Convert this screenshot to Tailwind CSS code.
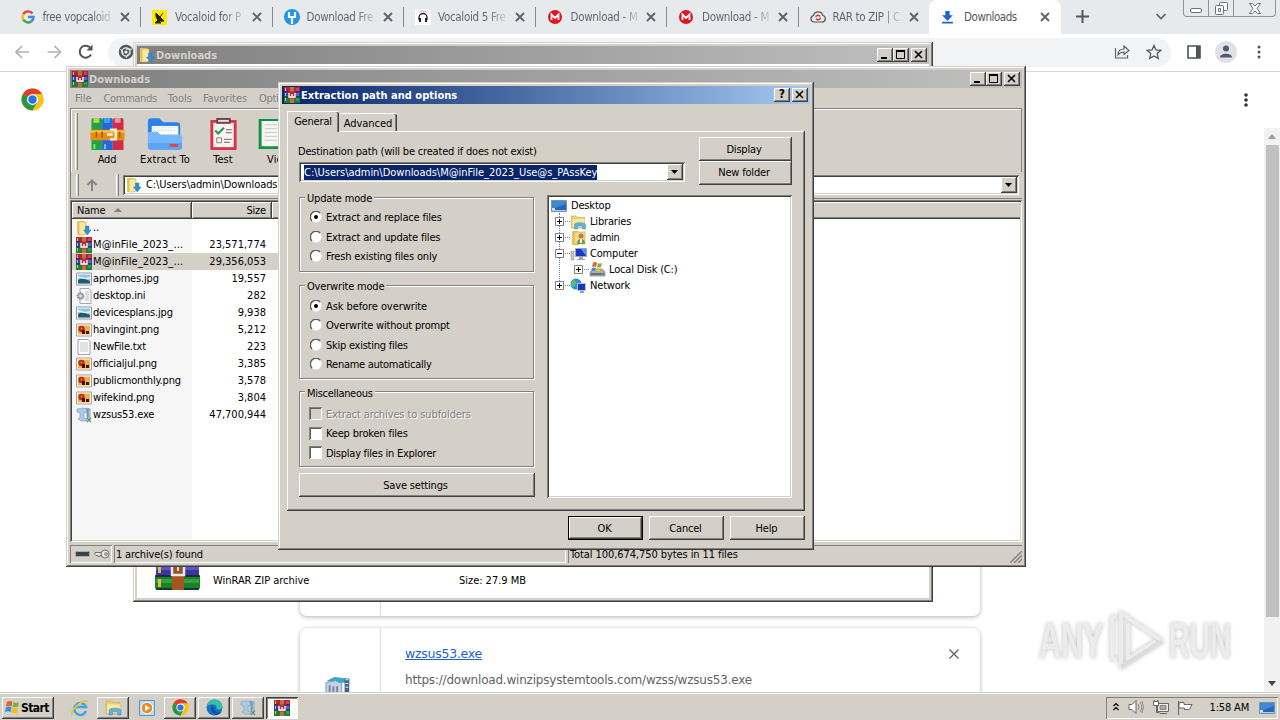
<!DOCTYPE html>
<html lang="en">
<head>
  <meta charset="UTF-8">
  <meta name="viewport" content="width=device-width, initial-scale=1.0">
  <title>Downloads</title>
  <script src="https://cdn.jsdelivr.net/npm/@tailwindcss/browser@4"></script>
</head>
<body class="relative w-[1280px] h-[720px] overflow-hidden bg-white text-black font-['DejaVu_Sans_Condensed','DejaVu_Sans',sans-serif] text-[11px] leading-[14px] tracking-[-0.18px] whitespace-nowrap">

  <!-- shared icons -->
  <svg class="hidden">
    <symbol id="i-rar" viewBox="0 0 16 16">
      <path d="M0 0h16v5H0z" fill="#b3243c"/><path d="M0 5h16v5H0z" fill="#3b3fae"/><path d="M0 10h16v6H0z" fill="#15803d"/>
      <path d="M1 1h1v3H1zM1 11h1v3H1z" fill="#e8c547"/><path d="M1 6h1v3H1z" fill="#7dd3fc"/><path d="M12 1h3v3h-3z" fill="#d43c5c"/><path d="M12 6h3v3h-3z" fill="#5f62d0"/><path d="M12 11h3v3h-3z" fill="#26a04c"/>
      <path d="M0 4.700h16M0 10h16" stroke="#20202c" stroke-width=".7"/>
      <path d="M6 0h4v16H6z" fill="#c07030"/><path d="M4 4.500h8v7H4z" fill="#a03440"/><path d="M5 6v4h6V6M8 7v3" fill="none" stroke="#fff" stroke-width="1.300"/>
    </symbol>
    <symbol id="i-folder" viewBox="0 0 16 16">
      <path d="M1 1h7l1 2v12H1z" fill="#e9c860"/><path d="M3 2h7v12l-3 1H3z" fill="#fbe9a0" stroke="#d0a840" stroke-width=".6"/>
      <path d="M9.500 6h3.500v4h2l-3.700 5L7.500 10h2z" fill="#2e8fdc" stroke="#1e6fb8" stroke-width=".4"/>
    </symbol>
    <symbol id="i-jpg" viewBox="0 0 16 16">
      <path d="M.5 2h15v12H.5z" fill="#fff" stroke="#8a9aa8"/><path d="M2 3.500h12v9H2z" fill="#8cc7ea"/><path d="M2 9l4-2 8 3v2.500H2z" fill="#245a6c"/><path d="M2 5l7 2 5-1v2L8 8 2 7z" fill="#e4f4fb"/>
    </symbol>
    <symbol id="i-png" viewBox="0 0 16 16">
      <path d="M.5 2h15v12H.5z" fill="#fff" stroke="#a8a090"/><path d="M2 3.500h12v9H2z" fill="#f0b050"/><circle cx="5.500" cy="7" r="3.200" fill="#b8300e"/><path d="M6 8h3v4H6zM10 9h3v3h-3z" fill="#40140a"/><circle cx="5.500" cy="6.500" r="1" fill="#f07820"/>
    </symbol>
    <symbol id="i-txt" viewBox="0 0 16 16">
      <path d="M2 .5h10l2 2v13H2z" fill="#fbfbfb" stroke="#a0a8ac"/><path d="M4 4h8M4 6h8M4 8h8M4 10h8M4 12h8" stroke="#b8c0c4" stroke-width=".8"/>
    </symbol>
    <symbol id="i-ini" viewBox="0 0 16 16">
      <path d="M4 .5h9l2 2v13H4z" fill="#fbfbfb" stroke="#a0a8ac"/><path d="M9 4h4M9 6h4M10 8h3M9 10h4M9 12h4" stroke="#a8b0b4" stroke-width=".8"/>
      <circle cx="4.500" cy="8" r="3" fill="#e4e8ec" stroke="#7d8b98" stroke-width="1.700" stroke-dasharray="1.500 .7"/><circle cx="4.500" cy="8" r="2" fill="#dfe5ea" stroke="#6e7c8a" stroke-width=".7"/>
    </symbol>
    <symbol id="i-exe" viewBox="0 0 16 16">
      <path d="M1 2l6-1 4 1v3l-3 1v5l3 1v2H5l-3-2 2-2V6L1 5z" fill="#a9cbe4" stroke="#6e9cc0" stroke-width=".6"/><path d="M10 1l4 1v9h-3V4z" fill="#d2dde6" stroke="#5a84a8" stroke-width=".7"/><path d="M11 3h2M11 5h2M11 7h2M11 9h2" stroke="#3b6ea0"/><path d="M11 11l4 4M15 11l-4 4" stroke="#5f9470" stroke-width="1.300"/>
    </symbol>
    <symbol id="i-chrome" viewBox="0 0 24 24">
      <circle cx="12" cy="12" r="11.500" fill="#fbc116"/>
      <path d="M12 12L2 6.300A11.500 11.500 0 0 1 22 6.300H12z" fill="#e33b2e"/><path d="M12 12L2 6.300A11.500 11.500 0 0 0 12 23.500l5-8.600z" fill="#279847"/>
      <path d="M12 6.300h10a11.500 11.500 0 0 1-10 17.200l5-8.500z" fill="#fbc116"/>
      <circle cx="12" cy="12" r="5.700" fill="#fff"/><circle cx="12" cy="12" r="4.400" fill="#2675e8"/>
    </symbol>
    <symbol id="i-x" viewBox="0 0 10 10"><path d="M1 1l8 8M9 1l-8 8" stroke="#5f6368" stroke-width="1.900" fill="none"/></symbol>
    <symbol id="i-mega" viewBox="0 0 14 14"><circle cx="7" cy="7" r="7" fill="#e0151f"/><path d="M3.500 10V4.500L7 8l3.500-3.500V10" fill="none" stroke="#fff" stroke-width="1.800"/></symbol>
    <symbol id="i-desktop" viewBox="0 0 16 16"><path d="M.5 2.500h15v11H.5z" fill="#2367b8" stroke="#7493b4"/><path d="M1 3h14v3L1 11z" fill="#4088d4"/><path d="M1 12h14v1H1z" fill="#b4cce2"/><path d="M1 10h3v2H1z" fill="#cfe3f5"/></symbol>
    <symbol id="i-lib" viewBox="0 0 16 16"><path d="M1 2h5l1 1.500h7V14H1z" fill="#ecd06c" stroke="#c9a640" stroke-width=".6"/><path d="M2 5h12v8H2z" fill="#f9e9a2"/><path d="M4 15v-4.500C4 8 14 8 15 10.500V15h-3v-3H7v3z" fill="#5fb4dc" stroke="#3c88b4" stroke-width=".5"/></symbol>
    <symbol id="i-dl" viewBox="0 0 12 12"><path d="M4 0h4v4h3L6 9 1 4h3zM1 10h10v1.500H1z" fill="#1967d2"/></symbol>
    <symbol id="i-min" viewBox="0 0 16 14"><path d="M4 9h6v2H4z"/></symbol>
    <symbol id="i-max" viewBox="0 0 16 14"><path d="M3.500 2.500h8v8h-8z" fill="none" stroke="#000"/><path d="M3 2h9v2H3z"/></symbol>
    <symbol id="i-cls" viewBox="0 0 16 14"><path d="M4 3l7 7M11 3l-7 7" stroke="#000" stroke-width="1.600"/></symbol>
  </svg>

  <!-- browser: tab strip -->
  <div class="flex h-[34px] bg-[#e7eaed] pl-[9.5px] text-[11.5px] text-[#5f6368] tracking-[-0.3px]">
    <div class="flex items-center w-[131.5px] h-[34px] pl-[11px] pr-[11px] relative">
      <svg class="w-[14px] h-[14px] shrink-0" viewBox="0 0 14 14" fill="none" stroke-width="2.400"><path d="M11.500 3.500A5.500 5.500 0 0 0 2.300 4.300" stroke="#ea4335"/><path d="M2.300 4.300a5.500 5.500 0 0 0 0 5.400" stroke="#fbbc05"/><path d="M2.300 9.700a5.500 5.500 0 0 0 8.200 1.500" stroke="#34a853"/><path d="M10.500 11.200A5.500 5.500 0 0 0 12.500 7H7" stroke="#4285f4"/></svg>
      <span class="ml-2 w-[76px] tracking-[-0.4px] bg-linear-to-r from-[#5f6368] from-[50px] to-[#5f6368]/10 to-[70px] bg-clip-text text-transparent">free vopcaloid</span>
      <svg class="w-[10px] h-[10px] ml-auto shrink-0"><use href="#i-x"/></svg>
      <i class="absolute right-0 top-[7px] w-px h-5 bg-[#85888c]"></i>
    </div>
    <div class="flex items-center w-[131.5px] h-[34px] pl-[11px] pr-[11px] relative">
      <svg class="w-[15px] h-[15px] shrink-0" viewBox="0 0 15 15"><path d="M0 0h15v15H0z" fill="#ffe900"/><path d="M4 3l8 8c-4 1-9-1-8-8zM6 10l-3 3h6zM8 7l3-4" fill="#222" stroke="#222"/></svg>
      <span class="ml-2 w-[75px] bg-linear-to-r from-[#5f6368] from-[50px] to-[#5f6368]/10 to-[70px] bg-clip-text text-transparent">Vocaloid for P</span>
      <svg class="w-[10px] h-[10px] ml-auto shrink-0"><use href="#i-x"/></svg>
      <i class="absolute right-0 top-[7px] w-px h-5 bg-[#85888c]"></i>
    </div>
    <div class="flex items-center w-[131.5px] h-[34px] pl-[11px] pr-[11px] relative">
      <svg class="w-[16px] h-[16px] shrink-0" viewBox="0 0 16 16"><circle cx="8" cy="8" r="8" fill="#2196e8"/><path d="M5 3v5h6V3M8 8v7" stroke="#fff" stroke-width="2.200" fill="none"/></svg>
      <span class="ml-[7px] w-[75px] bg-linear-to-r from-[#5f6368] from-[50px] to-[#5f6368]/10 to-[70px] bg-clip-text text-transparent">Download Fre</span>
      <svg class="w-[10px] h-[10px] ml-auto shrink-0"><use href="#i-x"/></svg>
      <i class="absolute right-0 top-[7px] w-px h-5 bg-[#85888c]"></i>
    </div>
    <div class="flex items-center w-[131.5px] h-[34px] pl-[11px] pr-[11px] relative">
      <svg class="w-[16px] h-[16px] shrink-0" viewBox="0 0 16 16"><path d="M0 0h16v16H0z" fill="#fff"/><path d="M4 11V8.500a4 4 0 0 1 8 0V11" stroke="#222" stroke-width="1.300" fill="none"/><path d="M4 9h2v4H4zM10 9h2v4h-2z" fill="#222"/><path d="M4 3q4-2 8 0" stroke="#bbb" fill="none"/></svg>
      <span class="ml-[7px] w-[75px] bg-linear-to-r from-[#5f6368] from-[50px] to-[#5f6368]/10 to-[70px] bg-clip-text text-transparent">Vocaloid 5 Fre</span>
      <svg class="w-[10px] h-[10px] ml-auto shrink-0"><use href="#i-x"/></svg>
      <i class="absolute right-0 top-[7px] w-px h-5 bg-[#85888c]"></i>
    </div>
    <div class="flex items-center w-[131.5px] h-[34px] pl-[12px] pr-[11px] relative">
      <svg class="w-[14px] h-[14px] shrink-0"><use href="#i-mega"/></svg>
      <span class="ml-[9px] w-[75px] bg-linear-to-r from-[#5f6368] from-[50px] to-[#5f6368]/10 to-[70px] bg-clip-text text-transparent">Download - M</span>
      <svg class="w-[10px] h-[10px] ml-auto shrink-0"><use href="#i-x"/></svg>
      <i class="absolute right-0 top-[7px] w-px h-5 bg-[#85888c]"></i>
    </div>
    <div class="flex items-center w-[131.5px] h-[34px] pl-[12px] pr-[11px] relative">
      <svg class="w-[14px] h-[14px] shrink-0"><use href="#i-mega"/></svg>
      <span class="ml-[9px] w-[75px] bg-linear-to-r from-[#5f6368] from-[50px] to-[#5f6368]/10 to-[70px] bg-clip-text text-transparent">Download - M</span>
      <svg class="w-[10px] h-[10px] ml-auto shrink-0"><use href="#i-x"/></svg>
      <i class="absolute right-0 top-[7px] w-px h-5 bg-[#85888c]"></i>
    </div>
    <div class="flex items-center w-[130.500px] h-[34px] pl-[11px] pr-[10px]">
      <svg class="w-[16px] h-[16px] shrink-0" viewBox="0 0 16 16" fill="none"><path d="M4 13a3.300 3.300 0 0 1-.5-6.500 4.800 4.800 0 0 1 9.300 0A3.300 3.300 0 0 1 12 13z" stroke="#555" stroke-width="1.200"/><circle cx="8" cy="8.500" r="2.200" stroke="#d33" stroke-width="1.400" stroke-dasharray="5 1.500"/></svg>
      <span class="ml-[7px] w-[75px] bg-linear-to-r from-[#5f6368] from-[50px] to-[#5f6368]/10 to-[70px] bg-clip-text text-transparent">RAR to ZIP | C</span>
      <svg class="w-[10px] h-[10px] ml-auto shrink-0"><use href="#i-x"/></svg>
    </div>
    <div class="flex items-center w-[132px] h-[34px] pl-[12px] pr-[11px] bg-white rounded-t-[8px]">
      <svg class="w-[13px] h-[13px] shrink-0"><use href="#i-dl"/></svg>
      <span class="ml-[10px] text-[#54585c] tracking-[-0.45px]">Downloads</span>
      <svg class="w-[10px] h-[10px] ml-auto shrink-0"><use href="#i-x"/></svg>
    </div>
    <svg class="w-[13px] h-[13px] ml-[15px] mt-[10px]" viewBox="0 0 13 13"><path d="M6.500 0v13M0 6.500h13" stroke="#54575b" stroke-width="2"/></svg>
    <svg class="w-[10px] h-[7px] ml-[67px] mt-[13px]" viewBox="0 0 10 7" fill="none"><path d="M.5 1L5 5.500 9.500 1" stroke="#5c6064" stroke-width="1.600"/></svg>
    <div class="flex ml-[17px] w-[93px] h-[17px] border border-t-0 border-[#8f9296] rounded-b-[4px] text-[#5c6064]">
      <span class="flex w-[25px] border-r border-[#8f9296] justify-center pt-[8px]"><i class="block w-[12px] h-[5px] rounded-[2px] border border-[#6c7074] bg-white"></i></span>
      <span class="flex w-[25px] border-r border-[#8f9296] justify-center pt-[2px]"><svg class="w-[13px] h-[13px]" viewBox="0 0 13 13" fill="#fff" stroke="#6c7074"><path d="M4.500 1.500q0-1 1-1h6q1 0 1 1v6q0 1-1 1h-7z"/><path d="M.5 4.500q0-1 1-1h6q1 0 1 1v7q0 1-1 1h-6q-1 0-1-1z"/><path d="M3.500 6.500h2v3h-2z"/></svg></span>
      <span class="flex flex-1 justify-center pt-[3px]"><svg class="w-[12px] h-[11px]" viewBox="0 0 12 11" fill="#fff" stroke="#6c7074"><path d="M.5.5h3L6 3 8.500.5h3L8 5.500l3.500 5h-3L6 8l-2.500 2.500h-3L4 5.500z"/></svg></span>
    </div>
  </div>

  <!-- browser: toolbar -->
  <div class="flex items-center h-[38px] border-b border-[#d4d6d9] pl-[14px]">
    <svg class="w-[72px] h-[16px] -mt-[1px]" viewBox="0 0 72 16" fill="none" stroke="#b0b2b5" stroke-width="1.700"><path d="M15 8H2M8 2L2 8l6 6M33.500 8h13M40.500 2l6 6-6 6"/></svg>
    <svg class="w-[16px] h-[16px] -ml-[8px] -mt-[1px]" viewBox="0 0 16 16" fill="none"><path d="M13 10.500A6 6 0 1 1 12.500 4" stroke="#505458" stroke-width="2"/><path d="M14.500.5v6h-6z" fill="#505458"/></svg>
    <div class="flex items-center w-[1063px] h-[29px] ml-[14px] -mt-[1px] pl-[10px] pr-[9px] rounded-full bg-[#f1f3f4]">
      <svg class="w-[16px] h-[16px]" viewBox="0 0 16 16" fill="none" stroke="#54585c" stroke-width="2.500"><circle cx="8" cy="8" r="6"/><circle cx="8" cy="8" r="2.500" stroke-width="1.800"/><path d="M8 5.200h6M5.500 9.500L2.500 5M10.500 9.500L8 14" stroke="#f1f3f4" stroke-width="1"/></svg>
      <svg class="w-[16px] h-[14px] ml-auto" viewBox="0 0 16 14" fill="none" stroke="#5f6368" stroke-width="1.200"><path d="M1.500 3v10h12v-3"/><path d="M4 10c0-4 2-6 6-6V1l5 4.500-5 4V7c-3 0-4.500 1-6 3z"/></svg>
      <svg class="w-[16px] h-[16px] ml-[16px]" viewBox="0 0 16 16" fill="none" stroke="#54585c" stroke-width="1.300"><path d="M8 1.500l2 4.500 4.800.4-3.600 3.200 1.100 4.800L8 11.900l-4.300 2.500 1.100-4.800L1.200 6.400 6 6z"/></svg>
    </div>
    <svg class="w-[14px] h-[14px] ml-[16px] -mt-px" viewBox="0 0 14 14"><path d="M1 1h12v12H1z" fill="none" stroke="#505458" stroke-width="1.600"/><path d="M9 1h4v12H9z" fill="#505458"/></svg>
    <svg class="w-[22px] h-[22px] ml-[14px] -mt-px" viewBox="0 0 22 22"><circle cx="11" cy="11" r="11" fill="#dfe1e6"/><circle cx="11" cy="7.500" r="3" fill="#4c5b78"/><path d="M5 16.500c0-5 12-5 12 0z" fill="#4c5b78"/></svg>
    <svg class="w-[4px] h-[14px] ml-[20px] -mt-px" viewBox="0 0 4 14" fill="#505458"><circle cx="2" cy="2" r="1.500"/><circle cx="2" cy="7" r="1.500"/><circle cx="2" cy="12" r="1.500"/></svg>
  </div>

  <!-- browser: downloads page -->
  <div class="relative flex h-[620px] overflow-hidden font-['DejaVu_Sans','Liberation_Sans',sans-serif]">
    <svg class="w-[23px] h-[23px] ml-[21px] mt-[16px]"><use href="#i-chrome"/></svg>
    <div class="ml-[256px] w-[680px] flex flex-col gap-[12px]">
      <div class="h-[544px] shrink-0 rounded-[7px] bg-white shadow-[0_1px_4px_#b0b0b0] pl-[80px]"><div class="h-full border-l border-[#dadce0]"></div></div>
      <div class="h-[160px] shrink-0 rounded-[7px] bg-white shadow-[0_1px_4px_#b0b0b0] flex">
        <div class="w-[80px] pl-[25px] pt-[48px]"><svg class="w-[28px] h-[28px]" viewBox="0 0 30 30"><path d="M2 5l8-4 16 2v6l-6-2-9 2z" fill="#35a8cc"/><path d="M1 7l10-2 7 3v12H1z" fill="#c8d0de" stroke="#8098b8"/><path d="M5 10v8M9 11v8M13 11v8" stroke="#7482b8" stroke-width="2"/><path d="M21 3h5v20h-5z" fill="#40688e"/><path d="M22 4h3M22 8h3M22 12h3" stroke="#fff"/></svg></div>
        <div class="border-l border-[#dadce0] pl-6 pt-[17px] flex-1">
          <div class="flex items-center pr-[21px]">
            <a class="text-[12.500px] leading-[18px] text-[#1a62d0] underline tracking-[-0.25px]">wzsus53.exe</a>
            <svg class="w-[10px] h-[10px] ml-auto" viewBox="0 0 10 10"><path d="M.5.500l9 9M9.500.500l-9 9" stroke="#5f6368" stroke-width="1.400"/></svg>
          </div>
          <p class="mt-[8px] text-[12px] leading-[18px] text-[#5f6368] tracking-[-0.2px]">https://download.winzipsystemtools.com/wzss/wzsus53.exe</p>
        </div>
      </div>
    </div>
    <svg class="w-[4px] h-[14px] ml-[264px] mt-[21px]" viewBox="0 0 4 14" fill="#333"><circle cx="2" cy="2" r="1.800"/><circle cx="2" cy="7" r="1.800"/><circle cx="2" cy="12" r="1.800"/></svg>
    <div class="ml-auto mt-[56px] w-[16px] h-[564px] bg-[#f1f1f1] flex flex-col items-center pt-[6px]">
      <svg class="w-[8px] h-[5px]" viewBox="0 0 8 5"><path d="M0 5l4-5 4 5z" fill="#9a9a9a"/></svg>
      <div class="w-[13px] h-[472px] mt-[6px] bg-[#c1c1c1]"></div>
      <svg class="w-[8px] h-[5px] mt-[64px]" viewBox="0 0 8 5"><path d="M0 0h8L4 5z" fill="#444"/></svg>
    </div>
    <!-- watermark -->
    <div class="absolute left-[1039px] top-[537px] flex items-center h-[64px] text-[#ececec] font-bold font-['Liberation_Sans',sans-serif] tracking-normal drop-shadow-[0_0_2px_#c0c0c0]">
      <span class="block w-[69px] text-[50px] leading-[50px] origin-left scale-x-[0.61]">ANY</span>
      <svg class="w-[57px] h-[64px]" viewBox="0 0 57 64" fill="none" stroke="#ececec" stroke-width="4" stroke-linejoin="round"><path d="M9 8H4v42h5M13 4v54l41-26z"/><path d="M20 14v36l28-18"/><path d="M13 58l41-26" stroke="#dcdcdc"/></svg>
      <span class="block w-[66px] ml-[4px] text-[50px] leading-[50px] origin-left scale-x-[0.57]">RUN</span>
    </div>
  </div>

  <!-- taskbar -->
  <div class="flex items-center h-[28px] bg-[#d4d0c8] border-t border-[#d4d0c8] shadow-[inset_0_1px_#fff] pl-[2px] pt-[2px]">
    <div class="flex items-center w-[52px] h-[22px] pl-[3px] font-bold text-[12px] tracking-[-0.55px] shadow-[inset_-1px_-1px_#404040,inset_1px_1px_#fff,inset_-2px_-2px_#808080]">
      <svg class="w-[15px] h-[15px] mr-[1px]" viewBox="0 0 16 16"><path d="M2 2q3-2 6 0L7 7Q4 5 1 7z" fill="#e8632b"/><path d="M9 2q3 2 6 0l-1 5q-3 2-6 0z" fill="#76b83c"/><path d="M1 8q3-2 6 0l-1 5q-3-2-6 0z" fill="#3b8ede"/><path d="M8 8q3 2 6 0l-1 5q-3 2-6 0z" fill="#f5b921"/></svg>Start
    </div>
    <svg class="w-[18px] h-[18px] ml-[17px]" viewBox="0 0 18 18" fill="none"><path d="M15 12a6 6 0 1 1 0-4H4" stroke="#3ea6e0" stroke-width="2.600"/><path d="M1 16C-1 12 10 1 17 2" stroke="#f0bf30" stroke-width="1.600"/></svg>
    <div class="flex items-center justify-center w-[32px] h-[22px] ml-[8px] shadow-[inset_-1px_-1px_#404040,inset_1px_1px_#fff,inset_-2px_-2px_#808080]"><svg class="w-[17px] h-[17px]"><use href="#i-lib"/></svg></div>
    <svg class="w-[16px] h-[16px] ml-[10px]" viewBox="0 0 16 16"><path d="M.5.500h15v15H.5z" fill="#b9dcf4" stroke="#4c9ad0"/><circle cx="8" cy="8" r="5.800" fill="#f08a1c" stroke="#fff"/><path d="M6 5l5 3-5 3z" fill="#fff"/></svg>
    <div class="flex items-center justify-center w-[32px] h-[22px] ml-[9px] shadow-[inset_-1px_-1px_#404040,inset_1px_1px_#fff,inset_-2px_-2px_#808080]"><svg class="w-[17px] h-[17px]"><use href="#i-chrome"/></svg></div>
    <div class="flex items-center justify-center w-[32px] h-[22px] ml-[2px] shadow-[inset_-1px_-1px_#404040,inset_1px_1px_#fff,inset_-2px_-2px_#808080]"><svg class="w-[17px] h-[17px]" viewBox="0 0 17 17"><circle cx="8.500" cy="8.500" r="8" fill="#1571c8"/><path d="M1 7C2 2 6 0 10 .700c5 1 7 5 6.300 8-1 2.500-5 2-6 .8 1-2-1-4-3-4C4 5.500 2 6 1 7z" fill="#35c1a8"/><path d="M7 6c-4 3-1 9 4 10 3-1 4.500-3 4.500-3-5 1.500-8-1-8.500-7z" fill="#0d4fa0"/></svg></div>
    <div class="flex items-center justify-center w-[32px] h-[22px] ml-[2px] shadow-[inset_-1px_-1px_#404040,inset_1px_1px_#fff,inset_-2px_-2px_#808080]"><svg class="w-[16px] h-[16px]"><use href="#i-exe"/></svg></div>
    <div class="flex items-center justify-center w-[32px] h-[22px] ml-[2px] bg-[#fbfaf8] shadow-[inset_1px_1px_#404040,inset_-1px_-1px_#fff,inset_2px_2px_#808080]"><svg class="w-[16px] h-[16px]"><use href="#i-rar"/></svg></div>
    <div class="flex items-center ml-auto mr-[2px] w-[172px] h-[22px] pl-[7px] pr-[3px] shadow-[inset_1px_1px_#808080,inset_-1px_-1px_#fff]">
      <svg class="w-[6px] h-[9px] -mt-[2px]" viewBox="0 0 6 9" fill="none" stroke="#000" stroke-width="1.200"><path d="M.5 4L3 1.500 5.500 4M.5 8L3 5.500 5.500 8"/></svg>
      <svg class="w-[16px] h-[14px] ml-[9px] -mt-px" viewBox="0 0 16 14" fill="none" stroke="#666"><path d="M1 4.500h3l4-4v13l-4-4H1z" fill="#fff"/><path d="M10 4q2 3 0 6M12 2q3.500 5 0 10M14 1q3 6 0 12" stroke="#888"/></svg>
      <svg class="w-[16px] h-[15px] ml-[9px]" viewBox="0 0 16 15" fill="#eee" stroke="#666"><path d="M4.500 3.500h11v8h-11zM7 13.500h7"/><path d="M7 5.500h6v4H7z" fill="#aaa" stroke="#888"/><path d="M.5 1.500h5v4h-2v7h3" fill="none"/><path d="M.5 1.500h5v4h-5z" fill="#fff"/><path d="M1.500 0v2M4.500 0v2"/></svg>
      <svg class="w-[17px] h-[14px] ml-[8px]" viewBox="0 0 17 14" fill="#fff" stroke="#666"><path d="M1.500 0v14M2 1.500h5v2q3 0 8 0l-2.500 5h-5v-1.500H2z"/></svg>
      <span class="ml-auto mr-[10px]">1:58 AM</span>
      <svg class="w-[16px] h-[16px]"><use href="#i-desktop"/></svg>
    </div>
  </div>

  <!-- explorer window -->
  <div class="absolute left-[133px] top-[42px] w-[800px] h-[560px] bg-[#d4d0c8] p-[4px] shadow-[inset_-1px_-1px_#404040,inset_1px_1px_#d4d0c8,inset_-2px_-2px_#808080,inset_2px_2px_#fff] flex flex-col">
    <div class="flex items-center h-[18px] pl-[2px] pr-[2px] bg-linear-to-r from-[#808080] to-[#c0c0c0] text-[#d4d0c8] font-bold tracking-[0px]">
      <svg class="w-[16px] h-[16px] mr-[1px]"><use href="#i-folder"/></svg><span class="mt-px">Downloads</span>
      <span class="flex ml-auto">
        <i class="w-[16px] h-[14px] bg-[#d4d0c8] shadow-[inset_-1px_-1px_#404040,inset_1px_1px_#fff,inset_-2px_-2px_#808080]"><svg class="w-[16px] h-[14px]"><use href="#i-min"/></svg></i>
        <i class="w-[16px] h-[14px] bg-[#d4d0c8] shadow-[inset_-1px_-1px_#404040,inset_1px_1px_#fff,inset_-2px_-2px_#808080]"><svg class="w-[16px] h-[14px]"><use href="#i-max"/></svg></i>
        <i class="w-[16px] h-[14px] ml-[2px] bg-[#d4d0c8] shadow-[inset_-1px_-1px_#404040,inset_1px_1px_#fff,inset_-2px_-2px_#808080]"><svg class="w-[16px] h-[14px]"><use href="#i-cls"/></svg></i>
      </span>
    </div>
    <div class="flex-1 bg-white flex items-end pl-[18px] pb-[8px] tracking-[-0.03px]">
      <svg class="w-[45px] h-[42px]" viewBox="0 0 45 42"><path d="M0 0h45v16H0z" fill="#a0243c"/><path d="M1 15h43v13H1z" fill="#3a35a0"/><path d="M1 19h43v3H1z" fill="#5a55c8"/><path d="M0 28h45v12l-2 2H2l-2-2z" fill="#1c7f2c"/><path d="M1 31h43v4H1z" fill="#35a040"/><path d="M0 28h45M1 41h43" stroke="#123" stroke-width="1.500"/><path d="M3 17h3v8H3zM3 31h3v8H3z" fill="#d8c23c"/><path d="M17 15h12v27H17z" fill="#a85420"/><path d="M17 17h12v10H17z" fill="#9c5220" stroke="#e8e8e8" stroke-width="2.500"/><path d="M23 17v6" stroke="#ddd" stroke-width="2"/></svg>
      <span class="w-[246px] ml-[13px] mb-[2px]">WinRAR ZIP archive</span>
      <span class="mb-[2px]">Size: 27.9 MB</span>
    </div>
  </div>

  <!-- WinRAR main window -->
  <div class="absolute left-[66px] top-[66px] w-[960px] h-[501px] bg-[#d4d0c8] p-[4px] shadow-[inset_-1px_-1px_#404040,inset_1px_1px_#d4d0c8,inset_-2px_-2px_#808080,inset_2px_2px_#fff] flex flex-col">
    <div class="flex items-center h-[18px] pl-[2px] pr-[2px] bg-linear-to-r from-[#808080] to-[#c0c0c0] text-[#d4d0c8] font-bold tracking-[0px] shrink-0">
      <svg class="w-[16px] h-[16px] mr-[1px]"><use href="#i-rar"/></svg><span class="mt-px">Downloads</span>
      <span class="flex ml-auto">
        <i class="w-[16px] h-[14px] bg-[#d4d0c8] shadow-[inset_-1px_-1px_#404040,inset_1px_1px_#fff,inset_-2px_-2px_#808080]"><svg class="w-[16px] h-[14px]"><use href="#i-min"/></svg></i>
        <i class="w-[16px] h-[14px] bg-[#d4d0c8] shadow-[inset_-1px_-1px_#404040,inset_1px_1px_#fff,inset_-2px_-2px_#808080]"><svg class="w-[16px] h-[14px]"><use href="#i-max"/></svg></i>
        <i class="w-[16px] h-[14px] ml-[2px] bg-[#d4d0c8] shadow-[inset_-1px_-1px_#404040,inset_1px_1px_#fff,inset_-2px_-2px_#808080]"><svg class="w-[16px] h-[14px]"><use href="#i-cls"/></svg></i>
      </span>
    </div>
    <div class="flex items-center h-[20px] gap-[12px] pl-[5px] pt-px text-[#808080] tracking-[-0.35px] shrink-0"><span class="tracking-[0px]">File</span><span>Commands</span><span class="tracking-[0px] -ml-px">Tools</span><span class="tracking-[-0.05px] -ml-px">Favorites</span><span>Options</span></div>

    <!-- toolbar -->
    <div class="flex h-[64px] shrink-0 border border-[#808080] border-b-0 shadow-[inset_1px_1px_#fff] pl-[4px] pt-[4px]">
      <i class="w-[3px] h-[57px] border-l border-white border-r border-r-[#808080]"></i>
      <div class="flex text-center">
        <div class="w-[58px] flex flex-col items-center pt-[4px]">
          <svg class="w-[35px] h-[34px]" viewBox="0 0 35 35"><path d="M1 3q0-2 2-2h7q2 0 2 2v31H1z" fill="#24a148"/><path d="M12 3q0-2 2-2h7q2 0 2 2v31H12z" fill="#2467dc"/><path d="M23 3q0-2 2-2h7q2 0 2 2v31H23z" fill="#d42c48"/><path d="M3 1h6v5H3z" fill="#a8dc48"/><path d="M14 1h6v5h-6z" fill="#38a8f0"/><path d="M25 1h6v5h-6z" fill="#f09098"/><path d="M3 28h2v5H3z" fill="#8ce070"/><path d="M14 28h2v5h-2z" fill="#7cc0ff"/><path d="M0 13h35v11H0z" fill="#e88c18"/><path d="M0 15h35" stroke="#ffc548" stroke-width="2"/><path d="M20 13h6v10h-6M23 18h-6" fill="none" stroke="#fff4dc" stroke-width="2.500"/><path d="M6 15v6M12 15v6M30 15v6" stroke="#a85410" stroke-width="1.500"/></svg>
          <span class="mt-[2px]">Add</span>
        </div>
        <div class="w-[58px] flex flex-col items-center pt-[4px] tracking-[0.1px]">
          <svg class="w-[36px] h-[34px]" viewBox="0 0 38 35"><path d="M1 4q0-3 3-3h9l4 4h15q3 0 3 3v20H1z" fill="#2f7fe8"/><path d="M5 9h28v12H5z" fill="#fff"/><path d="M7 11h24M7 14h24" stroke="#a8c8f0" stroke-dasharray="1.500 1.500"/><path d="M1 17q0-2 3-2h7l3 3h20q3 0 3 3v10q0 3-3 3H4q-3 0-3-3z" fill="#74b8fc"/><path d="M1 27h36v4q0 3-3 3H4q-3 0-3-3z" fill="#5ca4f8"/><path d="M24 28h9v3h-9z" fill="#e04838"/></svg>
          <span class="mt-[2px]">Extract To</span>
        </div>
        <div class="w-[58px] flex flex-col items-center pt-[4px] tracking-[0.1px]">
          <svg class="w-[29px] h-[34px]" viewBox="0 0 29 35"><path d="M1 3h27v30q0 1-1 1H2q-1 0-1-1z" fill="#d8344c"/><path d="M4 6h21v25H4z" fill="#f8f4f0"/><path d="M7 1h15v6H7z" fill="#704048"/><path d="M9 3h11v2H9z" fill="#e8e0e0"/><path d="M6 14l3 3 6-6" stroke="#1c9c58" stroke-width="2.200" fill="none"/><path d="M17 13h6M17 16h6M15 23h8M15 26h6" stroke="#907c84" stroke-width="1.300"/><path d="M7.500 21.500h5v5h-5z" fill="none" stroke="#907c84"/></svg>
          <span class="mt-[2px]">Test</span>
        </div>
        <div class="w-[58px] flex flex-col items-center pt-[4px] tracking-[0.1px]">
          <svg class="w-[48px] h-[34px]" viewBox="0 0 48 35"><path d="M1 2h46v31H1z" fill="#159048"/><path d="M4 4h19v26H4zM25 4h19v26H25z" fill="#f4f7f1"/><path d="M7 8h13M7 12h13M7 16h13M7 20h13M7 24h13" stroke="#c4ccc0"/></svg>
          <span class="mt-[2px] -ml-[4px]">View</span>
        </div>
      </div>
    </div>

    <!-- address row -->
    <div class="flex items-center h-[27px] shrink-0 border-l border-[#808080] border-b border-b-[#808080] pl-[5px] pr-[3px]">
      <i class="w-[3px] h-[22px] border-l border-white border-r border-r-[#808080]"></i>
      <svg class="w-[12px] h-[12px] ml-[7px]" viewBox="0 0 12 12" fill="none" stroke="#858585" stroke-width="2"><path d="M6 12V1M1.500 6L6 1.500 10.500 6"/></svg>
      <i class="w-[3px] h-[22px] ml-[18px] border-l border-white border-r border-r-[#808080]"></i>
      <div class="flex items-center flex-1 ml-[4px] h-[20px] bg-white pl-[3px] pr-[2px] tracking-[-0.08px] shadow-[inset_1px_1px_#808080,inset_-1px_-1px_#fff,inset_2px_2px_#404040,inset_-2px_-2px_#d4d0c8]">
        <svg class="w-[16px] h-[16px] mr-[4px]"><use href="#i-folder"/></svg>C:\Users\admin\Downloads
        <svg class="w-[16px] h-[16px] ml-auto" viewBox="0 0 16 16"><path d="M0 0h16v16H0z" fill="#404040"/><path d="M0 0h15v15H0z" fill="#fff"/><path d="M1 1h14v14H1z" fill="#808080"/><path d="M1 1h13v13H1z" fill="#d4d0c8"/><path d="M4 6h7l-3.500 4z"/></svg>
      </div>
    </div>

    <!-- file list -->
    <div class="h-[342px] shrink-0 mt-[1px] bg-white p-[2px] shadow-[inset_1px_1px_#808080,inset_-1px_-1px_#fff,inset_2px_2px_#404040,inset_-2px_-2px_#d4d0c8] flex flex-col">
      <div class="flex h-[17px] bg-[#d4d0c8] shrink-0">
        <span class="flex items-center w-[120px] pt-px pl-[5px] shadow-[inset_-1px_-1px_#404040,inset_1px_1px_#fff,inset_-2px_-2px_#808080]">Name <svg class="w-[8px] h-[4px] ml-[9px] -mt-[2px]" viewBox="0 0 8 4"><path d="M0 4l4-4 4 4z" fill="#808080"/></svg></span>
        <span class="flex items-center justify-end w-[80px] pt-px pr-[6px] shadow-[inset_-1px_-1px_#404040,inset_1px_1px_#fff,inset_-2px_-2px_#808080]">Size</span>
        <span class="flex-1 shadow-[inset_0_-1px_#404040,inset_1px_1px_#fff,inset_0_-2px_#808080]"></span>
      </div>
      <div class="flex-1 bg-linear-to-r from-[#f6f6f6] from-[120px] to-white to-[120px] [&>div]:flex [&>div]:items-center [&>div]:h-[17px] [&>div]:w-[208px] [&>div]:pl-[4px] [&>div]:pr-[14px] [&>div]:pt-px [&_svg]:w-[16px] [&_svg]:h-[16px] [&_svg]:mr-[1px] [&_svg]:-mt-px [&_b]:ml-auto [&_b]:font-normal [&_b]:tracking-[0px]">
        <div><svg><use href="#i-folder"/></svg>..</div>
        <div class="tracking-[0.1px]"><svg><use href="#i-rar"/></svg>M@inFile_2023_...<b>23,571,774</b></div>
        <div class="bg-[#d4d0c8] tracking-[0.1px]"><svg><use href="#i-rar"/></svg>M@inFile_2023_...<b>29,356,053</b></div>
        <div><svg><use href="#i-jpg"/></svg>aprhomes.jpg<b>19,557</b></div>
        <div><svg><use href="#i-ini"/></svg>desktop.ini<b>282</b></div>
        <div><svg><use href="#i-jpg"/></svg>devicesplans.jpg<b>9,938</b></div>
        <div><svg><use href="#i-png"/></svg>havingint.png<b>5,212</b></div>
        <div><svg><use href="#i-txt"/></svg>NewFile.txt<b>223</b></div>
        <div><svg><use href="#i-png"/></svg>officialjul.png<b>3,385</b></div>
        <div><svg><use href="#i-png"/></svg>publicmonthly.png<b>3,578</b></div>
        <div><svg><use href="#i-png"/></svg>wifekind.png<b>3,804</b></div>
        <div><svg><use href="#i-exe"/></svg>wzsus53.exe<b>47,700,944</b></div>
      </div>
    </div>

    <!-- status bar -->
    <div class="flex h-[18px] shrink-0 gap-[2px] mt-[3px]">
      <span class="flex items-center gap-[4px] w-[42px] pl-[5px] shadow-[inset_1px_1px_#808080,inset_-1px_-1px_#fff]">
        <svg class="w-[15px] h-[6px]" viewBox="0 0 15 6"><rect x=".5" y=".5" width="14" height="5" rx="1" fill="#34464c" stroke="#a8b0b0"/></svg>
        <svg class="w-[16px] h-[10px]" viewBox="0 0 16 10" fill="#e8e8e8" stroke="#707070"><path d="M8 3.500H1v2l1 1h2v1h2v-1h2z"/><circle cx="11" cy="5" r="4"/><circle cx="12" cy="5" r="1.300"/></svg>
      </span>
      <span class="w-[452px] pl-[2px] pt-[3px] shadow-[inset_1px_1px_#808080,inset_-1px_-1px_#fff]">1 archive(s) found</span>
      <span class="relative flex-1 pl-[2px] pt-[3px] tracking-[-0.08px] shadow-[inset_1px_1px_#808080]">Total 100,674,750 bytes in 11 files
        <svg class="absolute right-0 bottom-0 w-[12px] h-[12px]" viewBox="0 0 12 12" stroke="#808080" stroke-width="1.300"><path d="M0 12L12 0M4 12l8-8M8 12l4-4"/></svg>
      </span>
    </div>
  </div>

  <!-- extraction dialog -->
  <div class="absolute left-[278px] top-[82px] w-[536px] h-[468px] bg-[#d4d0c8] p-[4px] shadow-[inset_-1px_-1px_#404040,inset_1px_1px_#d4d0c8,inset_-2px_-2px_#808080,inset_2px_2px_#fff] flex flex-col">
    <div class="flex items-center h-[18px] pl-[2px] pr-[2px] bg-linear-to-r from-[#0a246a] to-[#a6caf0] text-white font-bold tracking-[0.02px] shrink-0">
      <svg class="w-[16px] h-[16px] mr-[1px]"><use href="#i-rar"/></svg><span class="mt-px">Extraction path and options</span>
      <span class="flex gap-[2px] ml-auto text-black">
        <b class="w-[16px] h-[14px] text-center leading-[13px] text-[12px] bg-[#d4d0c8] shadow-[inset_-1px_-1px_#404040,inset_1px_1px_#fff,inset_-2px_-2px_#808080]">?</b>
        <i class="w-[16px] h-[14px] bg-[#d4d0c8] shadow-[inset_-1px_-1px_#404040,inset_1px_1px_#fff,inset_-2px_-2px_#808080]"><svg class="w-[16px] h-[14px]"><use href="#i-cls"/></svg></i>
      </span>
    </div>

    <!-- tabs -->
    <div class="flex items-end h-[27px] shrink-0 pl-[5px]">
      <span class="relative z-10 w-[52px] h-[21px] -mb-px pt-[3px] pr-px text-center bg-[#d4d0c8] rounded-t-[2px] border-t border-l border-white shadow-[inset_-1px_0_#404040,inset_-2px_0_#808080]">General</span>
      <span class="w-[58px] h-[18px] pt-[3px] text-center rounded-t-[2px] border-t border-white tracking-[-0.05px] shadow-[inset_-1px_0_#404040,inset_-2px_0_#808080]">Advanced</span>
    </div>
    <div class="flex shrink-0 ml-[5px] w-[518px] h-[380px] pl-[12px] shadow-[inset_-1px_-1px_#404040,inset_1px_1px_#fff,inset_-2px_-2px_#808080]">
      <div class="w-[236px] flex flex-col">
        <span class="mt-[14px] -ml-px">Destination path (will be created if does not exist)</span>
        <div class="flex items-center w-[386px] h-[20px] shrink-0 mt-[3px] bg-white pl-[5px] pr-[2px] shadow-[inset_1px_1px_#808080,inset_-1px_-1px_#fff,inset_2px_2px_#404040,inset_-2px_-2px_#d4d0c8]">
          <span class="bg-[#0a246a] text-white tracking-[-0.02px] leading-[14px] pt-px">C:\Users\admin\Downloads\M@inFile_2023_Use@s_PAssKey</span>
          <svg class="w-[16px] h-[16px] ml-auto" viewBox="0 0 16 16"><path d="M0 0h16v16H0z" fill="#404040"/><path d="M0 0h15v15H0z" fill="#fff"/><path d="M1 1h14v14H1z" fill="#808080"/><path d="M1 1h13v13H1z" fill="#d4d0c8"/><path d="M4 6h7l-3.500 4z"/></svg>
        </div>

        <div class="relative h-[75px] shrink-0 mt-[15px] w-[235px] border border-[#808080] shadow-[1px_1px_#fff,inset_1px_1px_#fff] pt-[13px] pl-[10px] flex flex-col gap-[5.500px]">
          <span class="absolute -top-[6px] left-[5px] px-[2px] bg-[#d4d0c8] leading-[13px]">Update mode</span>
          <label class="flex items-center"><svg class="w-[12px] h-[12px] mr-[4px] -mt-[2px]" viewBox="0 0 12 12"><circle cx="6" cy="6" r="5.500" fill="#fff"/><path d="M2 10A5.500 5.500 0 0 1 10 2" fill="none" stroke="#606060" stroke-width="1.500"/><circle cx="6" cy="6" r="2"/></svg>Extract and replace files</label>
          <label class="flex items-center"><svg class="w-[12px] h-[12px] mr-[4px] -mt-[2px]" viewBox="0 0 12 12"><circle cx="6" cy="6" r="5.500" fill="#fff"/><path d="M2 10A5.500 5.500 0 0 1 10 2" fill="none" stroke="#606060" stroke-width="1.500"/></svg>Extract and update files</label>
          <label class="flex items-center"><svg class="w-[12px] h-[12px] mr-[4px] -mt-[2px]" viewBox="0 0 12 12"><circle cx="6" cy="6" r="5.500" fill="#fff"/><path d="M2 10A5.500 5.500 0 0 1 10 2" fill="none" stroke="#606060" stroke-width="1.500"/></svg>Fresh existing files only</label>
        </div>

        <div class="relative h-[94px] shrink-0 mt-[13px] w-[235px] border border-[#808080] shadow-[1px_1px_#fff,inset_1px_1px_#fff] pt-[13.5px] pl-[10px] flex flex-col gap-[5.500px]">
          <span class="absolute -top-[6px] left-[5px] px-[2px] bg-[#d4d0c8] leading-[13px]">Overwrite mode</span>
          <label class="flex items-center"><svg class="w-[12px] h-[12px] mr-[4px] -mt-[2px]" viewBox="0 0 12 12"><circle cx="6" cy="6" r="5.500" fill="#fff"/><path d="M2 10A5.500 5.500 0 0 1 10 2" fill="none" stroke="#606060" stroke-width="1.500"/><circle cx="6" cy="6" r="2"/></svg><span class="tracking-[-0.08px]">Ask before overwrite</span></label>
          <label class="flex items-center"><svg class="w-[12px] h-[12px] mr-[4px] -mt-[2px]" viewBox="0 0 12 12"><circle cx="6" cy="6" r="5.500" fill="#fff"/><path d="M2 10A5.500 5.500 0 0 1 10 2" fill="none" stroke="#606060" stroke-width="1.500"/></svg>Overwrite without prompt</label>
          <label class="flex items-center"><svg class="w-[12px] h-[12px] mr-[4px] -mt-[2px]" viewBox="0 0 12 12"><circle cx="6" cy="6" r="5.500" fill="#fff"/><path d="M2 10A5.500 5.500 0 0 1 10 2" fill="none" stroke="#606060" stroke-width="1.500"/></svg><span class="tracking-[-0.25px]">Skip existing files</span></label>
          <label class="flex items-center"><svg class="w-[12px] h-[12px] mr-[4px] -mt-[2px]" viewBox="0 0 12 12"><circle cx="6" cy="6" r="5.500" fill="#fff"/><path d="M2 10A5.500 5.500 0 0 1 10 2" fill="none" stroke="#606060" stroke-width="1.500"/></svg><span class="tracking-[-0.28px]">Rename automatically</span></label>
        </div>

        <div class="relative h-[76px] shrink-0 mt-[12px] w-[235px] border border-[#808080] shadow-[1px_1px_#fff,inset_1px_1px_#fff] pt-[15.5px] pl-[9px] flex flex-col gap-[5.500px]">
          <span class="absolute -top-[5px] left-[5px] px-[2px] bg-[#d4d0c8] leading-[13px] tracking-[-0.3px]">Miscellaneous</span>
          <label class="flex items-center text-[#808080] text-shadow-[1px_1px_#fff] tracking-[-0.1px]"><i class="w-[13px] h-[13px] mr-[4px] -mt-[2px] shadow-[inset_1px_1px_#808080,inset_-1px_-1px_#fff,inset_2px_2px_#606060]"></i>Extract archives to subfolders</label>
          <label class="flex items-center"><i class="w-[13px] h-[13px] mr-[4px] -mt-[2px] bg-white shadow-[inset_1px_1px_#808080,inset_-1px_-1px_#fff,inset_2px_2px_#606060]"></i>Keep broken files</label>
          <label class="flex items-center"><i class="w-[13px] h-[13px] mr-[4px] -mt-[2px] bg-white shadow-[inset_1px_1px_#808080,inset_-1px_-1px_#fff,inset_2px_2px_#606060]"></i><span class="tracking-[-0.25px]">Display files in Explorer</span></label>
        </div>
        <button class="h-[24px] shrink-0 mt-[6px] pr-[3px] pt-px shadow-[inset_-1px_-1px_#404040,inset_1px_1px_#fff,inset_-2px_-2px_#808080]">Save settings</button>
      </div>

      <div class="w-[245px] ml-[12px] flex flex-col">
        <div class="flex flex-col ml-auto w-[93px] mt-[6px]">
          <button class="h-[24px] pr-[3px] pt-px shadow-[inset_-1px_-1px_#404040,inset_1px_1px_#fff,inset_-2px_-2px_#808080]">Display</button>
          <button class="h-[24px] pr-[3px] shadow-[inset_-1px_-1px_#404040,inset_1px_1px_#fff,inset_-2px_-2px_#808080]">New folder</button>
        </div>
        <!-- folder tree -->
        <div class="relative mt-[10px] h-[303px] bg-white pt-[3px] pl-[4px] shadow-[inset_1px_1px_#808080,inset_-1px_-1px_#fff,inset_2px_2px_#404040,inset_-2px_-2px_#d4d0c8] [&>div]:flex [&>div]:items-center [&>div]:h-[16px] [&>div]:relative [&_svg]:mr-[4px]">
          <i class="absolute left-[12px] top-[18px] h-[72px] border-l border-dotted border-[#808080]"></i>
          <div><svg class="w-[16px] h-[16px]"><use href="#i-desktop"/></svg>Desktop</div>
          <div class="pl-[4px]"><svg class="w-[15px] h-[9px] !mr-0 -mt-px" viewBox="0 0 15 9" fill="none"><path d="M.5.500h8v8h-8z" fill="#fff" stroke="#808080"/><path d="M2 4.500h5M4.500 2v5" stroke="#000"/><path d="M10 4.500h5" stroke="#808080" stroke-dasharray="1 1"/></svg><svg class="w-[17px] h-[16px] !mr-[3px]"><use href="#i-lib"/></svg>Libraries</div>
          <div class="pl-[4px]"><svg class="w-[15px] h-[9px] !mr-0 -mt-px" viewBox="0 0 15 9" fill="none"><path d="M.5.500h8v8h-8z" fill="#fff" stroke="#808080"/><path d="M2 4.500h5M4.500 2v5" stroke="#000"/><path d="M10 4.500h5" stroke="#808080" stroke-dasharray="1 1"/></svg><svg class="w-[17px] h-[16px] !mr-[3px]" viewBox="0 0 17 16"><path d="M2 1h6l1 14H2z" fill="#e8c75c"/><path d="M4 2h11v12H4z" fill="#f5dc88" stroke="#c8a044" stroke-width=".6"/><circle cx="11" cy="6" r="2.500" fill="#c07840"/><path d="M7 14q0-5 4-5t4 5z" fill="#6f9c60"/><path d="M10 9h2v4h-2z" fill="#eee"/></svg><span class="tracking-[-0.3px]">admin</span></div>
          <div class="pl-[4px]"><svg class="w-[15px] h-[9px] !mr-0 -mt-px" viewBox="0 0 15 9" fill="none"><path d="M.5.500h8v8h-8z" fill="#fff" stroke="#808080"/><path d="M2 4.500h5" stroke="#000"/><path d="M10 4.500h5" stroke="#808080" stroke-dasharray="1 1"/></svg><svg class="w-[17px] h-[16px] !mr-[3px]" viewBox="0 0 17 16"><path d="M1 5h3v9H1z" fill="#c8c8c8" stroke="#888" stroke-width=".5"/><path d="M5.500 2.500h11v8h-11z" fill="#1c38c0" stroke="#9aa"/><path d="M11 3h5v7z" fill="#5c8cf0"/><path d="M9 11h4v2h2v1H7v-1h2z" fill="#9aa4aa"/></svg>Computer</div>
          <div class="pl-[23px]"><svg class="w-[15px] h-[9px] !mr-0 -mt-px" viewBox="0 0 15 9" fill="none"><path d="M.5.500h8v8h-8z" fill="#fff" stroke="#808080"/><path d="M2 4.500h5M4.500 2v5" stroke="#000"/><path d="M10 4.500h5" stroke="#808080" stroke-dasharray="1 1"/></svg><svg class="w-[17px] h-[16px] !mr-[3px]" viewBox="0 0 17 16"><path d="M1 10l3-3h9l3 3v4H1z" fill="#a8b0b4" stroke="#6c7478" stroke-width=".6"/><path d="M2 11h13v2H2z" fill="#687074"/><path d="M12 12h2v1h-2z" fill="#4c4"/><path d="M4 1q2-2 4 0L7 5q-2-1-4 0z" fill="#e8632b"/><path d="M9 1q2 1 4 0l-1 4q-2 1-4 0z" fill="#76b83c"/><path d="M3 6q2-1 4 0L6 9q-2-1-4 0z" fill="#3b8ede"/><path d="M8 6q2 1 4 0l-1 3q-2 1-4 0z" fill="#f5b921"/></svg>Local Disk (C:)</div>
          <div class="pl-[4px]"><svg class="w-[15px] h-[9px] !mr-0 -mt-px" viewBox="0 0 15 9" fill="none"><path d="M.5.500h8v8h-8z" fill="#fff" stroke="#808080"/><path d="M2 4.500h5M4.500 2v5" stroke="#000"/><path d="M10 4.500h5" stroke="#808080" stroke-dasharray="1 1"/></svg><svg class="w-[17px] h-[16px] !mr-[3px]" viewBox="0 0 17 16"><circle cx="6" cy="6" r="5.500" fill="#2d8fd8"/><path d="M3 2q5 1 3 4T2 9Q0 4 3 2z" fill="#58c070"/><path d="M7.500 5.500h8v7h-8z" fill="#1838c0" stroke="#b8c4d0"/><path d="M10 13h4v2h-4z" fill="#98a4ac"/></svg>Network</div>
        </div>
      </div>
    </div>

    <div class="flex gap-[6px] justify-end pr-[5px] mt-[5px] [&>button]:w-[75px] [&>button]:h-[24px] [&>button]:pt-px [&>button]:pr-[2px] [&>button]:tracking-[-0.2px]">
      <button class="border border-black shadow-[inset_-1px_-1px_#404040,inset_1px_1px_#fff,inset_-2px_-2px_#808080]">OK</button>
      <button class="shadow-[inset_-1px_-1px_#404040,inset_1px_1px_#fff,inset_-2px_-2px_#808080]">Cancel</button>
      <button class="shadow-[inset_-1px_-1px_#404040,inset_1px_1px_#fff,inset_-2px_-2px_#808080]">Help</button>
    </div>
  </div>
</body>
</html>
